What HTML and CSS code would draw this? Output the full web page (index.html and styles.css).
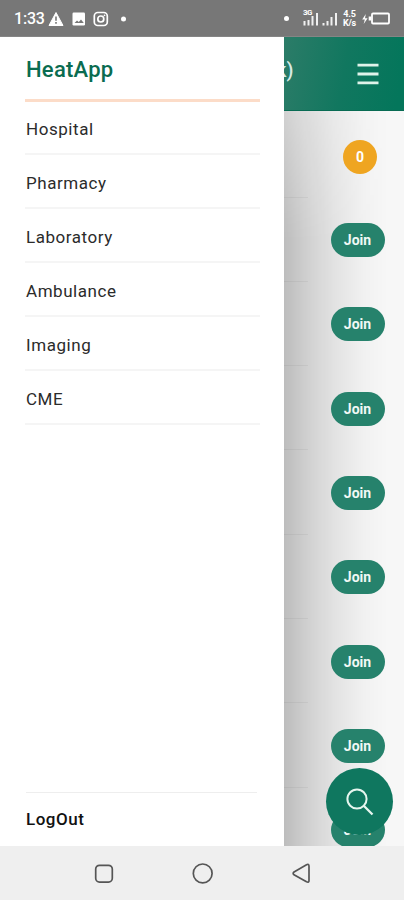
FILE: index.html
```
<!DOCTYPE html>
<html lang="en">
<head>
<meta charset="utf-8">
<title>HeatApp</title>
<link rel="stylesheet" href="styles.css">
</head>
<body>
<div class="phone">
  <header class="status">
    <span class="clock">1:33</span>
    <svg class="notices" width="80" height="18" viewBox="0 0 80 18">
      <path d="M8 2.5 15 15.5H1Z" fill="#fff" stroke="#fff" stroke-linejoin="round"/>
      <path d="M8 6.5v4.2M8 12v1.800" stroke="#777" stroke-width="1.6"/>
      <rect x="24.5" y="2.500" width="12.5" height="13" rx="1.2" fill="#fff"/>
      <path d="m26.500 13 2.500-2.500 1.800 1.500 2.200-2.500 2.800 3.500z" fill="#777"/>
      <rect x="46.3" y="2.500" width="13" height="13" rx="3.5" fill="none" stroke="#fff" stroke-width="1.7"/>
      <circle cx="52.8" cy="9" r="3" fill="none" stroke="#fff" stroke-width="1.7"/>
      <circle cx="56.5" cy="5.3" r=".9" fill="#fff"/>
      <circle cx="75.5" cy="9" r="2.5" fill="#fff"/>
    </svg>
    <div class="system">
      <i class="dot"></i>
      <div class="signal">
        <span class="network">3G</span>
        <svg width="37" height="17" viewBox="0 0 37 17" stroke="#f0f0f0" stroke-width="2">
          <path d="M2.500 15.500V11M6.500 15.500V10M10.500 15.500V6M15 15.500V3M21.500 15.500V13M25.500 15.500V11M29.500 15.500V7M34 15.500V3"/>
        </svg>
      </div>
      <span class="speed">4.5<br>K/s</span>
      <svg class="battery" width="30" height="14" viewBox="0 0 30 14" fill="none">
        <path d="M4.8 2 1.2 7.6h2.6L2.7 12 6.6 6.2H4Z" fill="#fff"/>
        <rect x="11" y="1.500" width="17" height="10" rx="1" stroke="#fff" stroke-width="1.8"/>
        <path d="M9 4.500v4" stroke="#fff" stroke-width="2.6"/>
      </svg>
    </div>
  </header>

  <main class="screen">
    <section class="page">
      <div class="topbar">
        <span class="title">k)</span>
        <svg width="22" height="22" viewBox="0 0 22 22" stroke="#dff3ea" stroke-width="2.8"><path d="M.5 2.200h21M.5 11h21M.5 19.800h21"/></svg>
      </div>
      <ul class="list">
        <li class="first"><span class="count">0</span></li>
        <li><button class="join">Join</button></li>
        <li><button class="join">Join</button></li>
        <li><button class="join">Join</button></li>
        <li><button class="join">Join</button></li>
        <li><button class="join">Join</button></li>
        <li><button class="join">Join</button></li>
        <li><button class="join">Join</button></li>
        <li><button class="join">Join</button></li>
      </ul>
      <div class="shade"></div>
    </section>
    <aside class="drawer">
      <h1>HeatApp</h1>
      <nav>
        <a>Hospital</a>
        <a>Pharmacy</a>
        <a>Laboratory</a>
        <a>Ambulance</a>
        <a>Imaging</a>
        <a>CME</a>
      </nav>
      <a class="logout">LogOut</a>
    </aside>
    <button class="search" aria-label="Search">
      <svg width="30" height="30" viewBox="0 0 30 30" fill="none" stroke="#e6f6ef" stroke-width="2"><circle cx="12" cy="12" r="9.6"/><path d="m19 19 8.500 8.500" stroke-width="2.3"/></svg>
    </button>
  </main>

  <footer class="system-nav">
    <svg width="404" height="54" viewBox="0 0 404 54" fill="none" stroke="#555" stroke-width="1.7">
      <rect x="95.7" y="19.3" width="16.6" height="16.8" rx="3.8"/>
      <circle cx="202.7" cy="27.4" r="9.4"/>
      <path d="M294 26 306.500 18.800Q309 17.600 309 20.300V34.400Q309 37 306.500 35.800L294 28.800Q292.300 27.400 294 26Z"/>
    </svg>
  </footer>
</div>
</body>
</html>
```
FILE: styles.css
```
* { box-sizing: border-box; }
body { margin: 0; font-family: Roboto, "Liberation Sans", sans-serif; }
button { border: 0; padding: 0; font-family: inherit; }
.phone { width: 404px; height: 900px; display: flex; flex-direction: column; overflow: hidden; }

.status { height: 37px; flex: none; display: flex; align-items: center; padding: 1px 13px 0 14px; background: #777; border-bottom: 1px solid #858585; color: #fff; }
.clock { width: 34px; font-size: 16px; font-weight: 500; letter-spacing: -.2px; white-space: nowrap; }
.notices { flex: none; }
.system { display: flex; align-items: center; margin-left: auto; }
.dot { width: 5px; height: 5px; border-radius: 50%; background: #fff; margin-right: 13px; }
.signal { position: relative; width: 38px; height: 17px; margin-right: 1px; }
.network { position: absolute; left: 1px; top: -1px; font-size: 8px; line-height: 8px; font-weight: 700; letter-spacing: -.5px; }
.speed { width: 17px; font-size: 9px; line-height: 9px; font-weight: 700; text-align: center; letter-spacing: -.2px; margin-right: 3px; }

.screen { position: relative; flex: 1; min-height: 0; overflow: hidden; }
.page { height: 100%; background: #f7f7f7; }
.topbar { height: 74px; display: flex; align-items: center; justify-content: space-between; padding: 0 25px 0 276px; background: linear-gradient(100deg, #2c7c68 68%, #11775f 84%, #04765b 98%); border-bottom: 1px solid #086b53; }
.title { color: #d9eae4; font-size: 20px; font-weight: 500; padding-bottom: 7px; }
.list { margin: 0; padding: 0; list-style: none; }
.list li { height: 84.300px; display: flex; align-items: center; justify-content: flex-end; padding: 1px 19.500px 0 0; background: linear-gradient(#ebebeb, #ebebeb) left bottom / 308px 1px no-repeat; }
.list .first { height: 86.500px; padding: 5px 27px 0 0; }
.count, .join { position: relative; z-index: 1; }
.count { width: 34px; height: 34px; border-radius: 50%; display: grid; place-items: center; background: #efa521; color: #fff; font-size: 14px; font-weight: 700; }
.join { width: 54px; height: 34px; border-radius: 17px; background: #26826c; color: #f1f8f5; font-size: 14px; font-weight: 700; }
.shade { position: absolute; left: 283px; top: 74px; width: 105px; bottom: 0; background: linear-gradient(90deg, rgba(0,0,0,.24), rgba(0,0,0,.16) 22%, rgba(0,0,0,.08) 50%, rgba(0,0,0,.025) 77%, transparent); -webkit-mask-image: linear-gradient(rgba(0,0,0,.65), #000 130px); mask-image: linear-gradient(rgba(0,0,0,.65), #000 130px); pointer-events: none; }

.drawer { position: absolute; inset: 0 auto 0 0; width: 283.500px; padding: 0 24px 0 25px; background: #fff; display: flex; flex-direction: column; }
.drawer h1 { margin: 0; height: 65px; padding: 0 1px; line-height: 65px; color: #0a6c50; font-size: 22px; font-weight: 500; letter-spacing: .25px; border-bottom: 3px solid #fcdcc8; }
.drawer nav { display: flex; flex-direction: column; }
.drawer nav a { height: 54px; padding-left: 1px; line-height: 56px; font-size: 17px; letter-spacing: .55px; color: #2b2b2b; border-bottom: 2px solid #f5f5f5; }
.drawer nav a:first-child { height: 53px; line-height: 54px; }
.logout { height: 54px; margin: auto 3px 0 1px; border-top: 1px solid #eee; line-height: 53px; font-size: 17px; font-weight: 500; letter-spacing: .5px; color: #111; }
.search { position: absolute; z-index: 2; right: 11px; bottom: 11px; width: 67px; height: 67px; border-radius: 50%; display: grid; place-items: center; background: #0f775f; }

.system-nav { height: 54px; flex: none; background: #efefef; }
.system-nav svg { display: block; }
```
